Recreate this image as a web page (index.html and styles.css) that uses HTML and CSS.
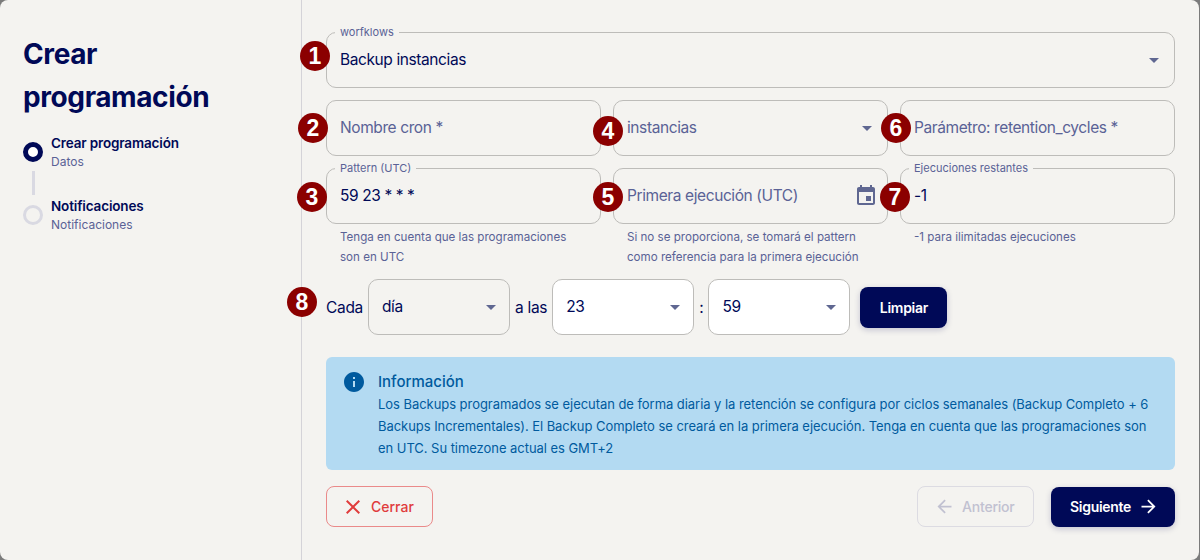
FILE: index.html
```html
<!DOCTYPE html>
<html lang="es">
<head>
    <meta charset="UTF-8">
    <title>Crear programación</title>
    <link rel="stylesheet" href="styles.css">
</head>
<body>
    <div class="dialog">
        <aside class="sidebar">
            <h1 class="sidebar__title">Crear programación</h1>
            <div class="step">
                <div class="step__track">
                    <span class="step__dot step__dot--active"></span>
                    <span class="step__line"></span>
                </div>
                <div>
                    <div class="step__name">Crear programación</div>
                    <div class="step__sub">Datos</div>
                </div>
            </div>
            <div class="step">
                <div class="step__track">
                    <span class="step__dot"></span>
                </div>
                <div>
                    <div class="step__name">Notificaciones</div>
                    <div class="step__sub">Notificaciones</div>
                </div>
            </div>
        </aside>

        <main class="main">
            <div class="field field--labelled">
                <fieldset class="field__outline"><legend>worfklows</legend></fieldset>
                <span class="badge badge--1">1</span>
                <span class="field__value">Backup instancias</span>
                <svg class="icon field__icon" viewBox="0 0 24 24"><path d="M7 10l5 5 5-5z"/></svg>
            </div>

            <div class="grid">
                <div class="field">
                    <span class="badge badge--2">2</span>
                    <span class="field__placeholder">Nombre cron *</span>
                </div>
                <div class="field">
                    <span class="badge badge--4">4</span>
                    <span class="field__placeholder">instancias</span>
                    <svg class="icon field__icon" viewBox="0 0 24 24"><path d="M7 10l5 5 5-5z"/></svg>
                </div>
                <div class="field">
                    <span class="badge badge--6">6</span>
                    <span class="field__placeholder">Parámetro: retention_cycles *</span>
                </div>
            </div>

            <div class="grid">
                <div>
                    <div class="field field--labelled">
                        <fieldset class="field__outline"><legend>Pattern (UTC)</legend></fieldset>
                        <span class="badge badge--3">3</span>
                        <span class="field__value">59 23 * * *</span>
                    </div>
                    <p class="helper">Tenga en cuenta que las programaciones son en UTC</p>
                </div>
                <div>
                    <div class="field">
                        <span class="badge badge--5">5</span>
                        <span class="field__placeholder">Primera ejecución (UTC)</span>
                        <svg class="icon field__icon field__icon--date" viewBox="0 0 24 24"><path d="M17 12h-5v5h5v-5zM16 1v2H8V1H6v2H5c-1.11 0-1.99.9-1.99 2L3 19c0 1.1.89 2 2 2h14c1.1 0 2-.9 2-2V5c0-1.1-.9-2-2-2h-1V1h-2zm3 18H5V8h14v11z"/></svg>
                    </div>
                    <p class="helper">Si no se proporciona, se tomará el pattern como referencia para la primera ejecución</p>
                </div>
                <div>
                    <div class="field field--labelled">
                        <fieldset class="field__outline"><legend>Ejecuciones restantes</legend></fieldset>
                        <span class="badge badge--7">7</span>
                        <span class="field__value">-1</span>
                    </div>
                    <p class="helper">-1 para ilimitadas ejecuciones</p>
                </div>
            </div>

            <div class="schedule">
                <span class="badge badge--8">8</span>
                <span>Cada</span>
                <div class="field field--small">
                    <span class="field__value">día</span>
                    <svg class="icon field__icon" viewBox="0 0 24 24"><path d="M7 10l5 5 5-5z"/></svg>
                </div>
                <span>a las</span>
                <div class="field field--small field--white">
                    <span class="field__value">23</span>
                    <svg class="icon field__icon" viewBox="0 0 24 24"><path d="M7 10l5 5 5-5z"/></svg>
                </div>
                <span>:</span>
                <div class="field field--small field--white">
                    <span class="field__value">59</span>
                    <svg class="icon field__icon" viewBox="0 0 24 24"><path d="M7 10l5 5 5-5z"/></svg>
                </div>
                <button class="btn btn--primary btn--clear">Limpiar</button>
            </div>

            <div class="alert">
                <svg class="alert__icon" viewBox="0 0 24 24"><path d="M12 2C6.48 2 2 6.48 2 12s4.48 10 10 10 10-4.48 10-10S17.52 2 12 2zm1 15h-2v-6h2v6zm0-8h-2V7h2v2z"/></svg>
                <div>
                    <div class="alert__title">Información</div>
                    <div class="alert__text">Los Backups programados se ejecutan de forma diaria y la retención se configura por ciclos semanales (Backup Completo + 6 Backups Incrementales). El Backup Completo se creará en la primera ejecución. Tenga en cuenta que las programaciones son en UTC. Su timezone actual es GMT+2</div>
                </div>
            </div>

            <div class="footer">
                <button class="btn btn--danger">
                    <svg class="btn__close" viewBox="0 0 24 24"><path d="M19 6.41L17.59 5 12 10.59 6.41 5 5 6.41 10.59 12 5 17.59 6.41 19 12 13.41 17.59 19 19 17.59 13.41 12z"/></svg>
                    Cerrar
                </button>
                <div class="footer__right">
                    <button class="btn btn--disabled">
                        <svg class="btn__arrow" viewBox="0 0 24 24"><path d="M20 11H7.83l5.59-5.59L12 4l-8 8 8 8 1.41-1.41L7.83 13H20v-2z"/></svg>
                        Anterior
                    </button>
                    <button class="btn btn--primary btn--next">
                        Siguiente
                        <svg class="btn__arrow" viewBox="0 0 24 24"><path d="M12 4l-1.41 1.41L16.17 11H4v2h12.17l-5.58 5.59L12 20l8-8z"/></svg>
                    </button>
                </div>
            </div>
        </main>
    </div>
</body>
</html>
```

FILE: styles.css
```css
*{
    box-sizing: border-box;
}
html{
    font-family: Inter, "Liberation Sans", sans-serif;
}
body{
    margin: 0;
    background: #7b7b7b;
    color: #000957;
}
.dialog{
    display: flex;
    width: 1199px;
    height: 560px;
    border-radius: 8px;
    background: #f4f3f0;
    overflow: hidden;
}

/* left column */
.sidebar{
    width: 302px;
    flex-shrink: 0;
    padding: 33px 0 0 23px;
    border-right: 1px solid #d4d3d8;
}
.sidebar__title{
    margin: 0 0 14px;
    width: 200px;
    font-size: 28px;
    line-height: 43px;
    font-weight: 700;
    letter-spacing: -0.4px;
}
.step{
    display: flex;
    gap: 8px;
}
.step__track{
    width: 20px;
    padding-top: 9px;
}
.step__dot{
    display: block;
    width: 20px;
    height: 20px;
    border-radius: 50%;
    border: 3px solid #d9d9e2;
}
.step__dot--active{
    border: 5px solid #000957;
    background: #fff;
}
.step__line{
    display: block;
    width: 3px;
    height: 24px;
    margin: 9px 0 1px 9px;
    background: #d9d9e2;
}
.step__name{
    font-size: 13.5px;
    line-height: 20px;
    font-weight: 600;
    letter-spacing: -0.15px;
}
.step__sub{
    font-size: 12px;
    line-height: 18px;
    color: #5a6296;
}

/* form */
.main{
    flex: 1;
    padding: 32px 24px 0;
}
.grid{
    display: grid;
    grid-template-columns: repeat(3, 275px);
    gap: 12px;
    margin-top: 12px;
}
.field{
    position: relative;
    display: flex;
    align-items: center;
    height: 56px;
    padding: 0 13px 2px;
    border: 1px solid #bdbcb9;
    border-radius: 10px;
    font-size: 15.5px;
    letter-spacing: -0.4px;
}
.field--labelled{
    border: none;
    padding: 0 14px 2px;
}
.field__outline{
    position: absolute;
    top: -5px;
    right: 0;
    bottom: 0;
    left: 0;
    margin: 0;
    padding: 0 8px;
    border: 1px solid #bdbcb9;
    border-radius: 10px;
    pointer-events: none;
}
.field__outline legend{
    padding: 0 5px;
    font-size: 11px;
    line-height: 11px;
    letter-spacing: 0;
    color: #5a6296;
}
.field__value{
    color: #000957;
}
.field__placeholder{
    color: #5a6296;
}
.field__icon{
    position: absolute;
    right: 8px;
    top: 15px;
}
.field--labelled .field__icon{
    right: 9px;
    top: 16px;
}
.field--small .field__icon{
    right: 6px;
}
.field .field__icon--date{
    right: 9px;
}
.icon{
    width: 24px;
    height: 24px;
    fill: #5f6791;
}
.helper{
    margin: 3px 0 0;
    padding: 0 14px;
    font-size: 11.6px;
    line-height: 20px;
    color: #5a6296;
}
.badge{
    position: absolute;
    width: 30px;
    height: 30px;
    border-radius: 50%;
    background: #8b0000;
    color: #fff;
    font-family: "Liberation Sans", sans-serif;
    font-size: 23px;
    font-weight: 700;
    line-height: 30px;
    letter-spacing: 0;
    text-align: center;
}
.badge--1{ left: -26px; top: 9px; }
.badge--2{ left: -29px; top: 12px; }
.badge--3{ left: -29px; top: 14px; }
.badge--4{ left: -21px; top: 15px; }
.badge--5{ left: -21px; top: 13px; }
.badge--6{ left: -20px; top: 12px; }
.badge--7{ left: -20px; top: 14px; }
.badge--8{ left: -39px; top: 8px; }

.schedule{
    position: relative;
    display: flex;
    align-items: center;
    gap: 5px;
    margin-top: 12px;
    font-size: 15.5px;
    letter-spacing: -0.3px;
}
.field--small{
    width: 142px;
}
.field--white{
    background: #fff;
}
.btn{
    display: inline-flex;
    align-items: center;
    height: 41px;
    border: 1px solid transparent;
    border-radius: 8px;
    font-family: inherit;
    font-size: 14px;
    font-weight: 500;
    background: transparent;
}
.btn svg{
    fill: currentColor;
}
.btn--primary{
    background: #000957;
    color: #fff;
    font-weight: 600;
    letter-spacing: -0.3px;
    box-shadow: 0 2px 6px rgba(0, 9, 87, .2);
}
.btn--clear{
    width: 87px;
    justify-content: center;
    margin-left: 5px;
}
.alert{
    display: flex;
    gap: 12px;
    height: 113px;
    margin-top: 22px;
    padding: 14px 16px 11px;
    border-radius: 6px;
    background: #b3daf2;
    color: #005a9e;
}
.alert__icon{
    width: 24px;
    height: 24px;
    margin-top: -1px;
    flex-shrink: 0;
    fill: #005a9e;
}
.alert__title{
    font-size: 15px;
    line-height: 22px;
    font-weight: 500;
}
.alert__text{
    font-size: 13px;
    line-height: 22px;
    letter-spacing: -0.05px;
}
.footer{
    display: flex;
    justify-content: space-between;
    align-items: center;
    margin-top: 16px;
}
.footer__right{
    display: flex;
    align-items: center;
    gap: 17px;
}
.btn--danger{
    width: 107px;
    padding-left: 14px;
    gap: 6px;
    border-color: #ea8a8a;
    color: #e03c3c;
}
.btn__close{
    width: 24px;
    height: 24px;
}
.btn__arrow{
    width: 21px;
    height: 21px;
}
.btn--disabled{
    width: 117px;
    padding-left: 16px;
    gap: 7px;
    border-color: #dcdbe2;
    color: #c1c1d1;
    letter-spacing: -0.2px;
}
.btn--next{
    width: 124px;
    height: 40px;
    padding-left: 18px;
    gap: 7px;
}
```
